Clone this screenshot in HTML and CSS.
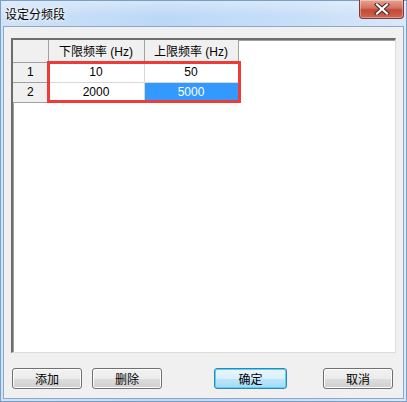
FILE: index.html
```html
<!DOCTYPE html>
<html>
<head>
<meta charset="utf-8">
<link rel="stylesheet" href="styles.css">
</head>
<body>
<div class="window">
  <div class="titlebar">
    <span class="title">设定分频段</span>
    <div class="close">
      <svg width="16" height="12" viewBox="0 0 16 12">
        <path d="M3 1.5 L13 10.5 M13 1.5 L3 10.5" stroke="#4a2a2a" stroke-width="4.2" stroke-linecap="square"/>
        <path d="M3 1.5 L13 10.5 M13 1.5 L3 10.5" stroke="#ffffff" stroke-width="2.2" stroke-linecap="square"/>
      </svg>
    </div>
  </div>
  <div class="client">
    <div class="gridbox">
      <div class="tablewrap">
        <table class="grid">
          <tr class="head">
            <th class="rh"></th>
            <th class="c1">下限频率 (Hz)</th>
            <th class="c2">上限频率 (Hz)</th>
          </tr>
          <tr>
            <td class="rh">1</td>
            <td>10</td>
            <td>50</td>
          </tr>
          <tr>
            <td class="rh">2</td>
            <td>2000</td>
            <td class="sel">5000</td>
          </tr>
        </table>
        <div class="highlight"></div>
      </div>
    </div>
    <div class="buttons">
      <div class="left">
        <button class="btn">添加</button>
        <button class="btn">删除</button>
      </div>
      <div class="right">
        <button class="btn default">确定</button>
        <button class="btn">取消</button>
      </div>
    </div>
  </div>
</div>
</body>
</html>
```
FILE: styles.css
```css
html, body {
  margin: 0;
  padding: 0;
  width: 407px;
  height: 402px;
  overflow: hidden;
  font-family: "Liberation Sans", "Noto Sans CJK SC", sans-serif;
  font-size: 12px;
}
.window {
  box-sizing: border-box;
  width: 407px;
  height: 402px;
  border: 1px solid #7b9ec4;
  background: linear-gradient(90deg, #cfe2f7 0%, #bcd8f6 40%, #c8dff8 75%, #d9e8fa 100%);
  display: flex;
  flex-direction: column;
  padding: 0 2px 2px 2px;
}
.titlebar {
  height: 25px;
  position: relative;
  display: flex;
  align-items: center;
  background: linear-gradient(180deg, rgba(255,255,255,0.35) 0%, rgba(255,255,255,0) 60%);
  margin: 0 -2px;
  padding: 0 2px;
}
.title {
  font-family: "Noto Sans CJK SC", sans-serif;
  font-size: 12px;
  color: #000;
  margin-left: 2px;
  text-shadow: 0 0 6px #ffffff, 0 0 3px #ffffff;
}
.close {
  position: absolute;
  right: 2px;
  top: -1px;
  width: 45px;
  height: 19px;
  border: 1px solid #7a3a38;
  border-top: none;
  border-radius: 0 0 4px 4px;
  background: linear-gradient(180deg, #e8a493 0%, #d5705e 45%, #c24a37 55%, #d2654f 100%);
  box-shadow: inset 0 0 0 1px rgba(255,255,255,0.35);
  display: flex;
  align-items: center;
  justify-content: center;
  box-sizing: border-box;
}
.client {
  flex: 1;
  background: #f0f0f0;
  border: 1px solid #8ea7c6;
  position: relative;
  display: flex;
  flex-direction: column;
}
.gridbox {
  margin: 11px 7px 0 7px;
  height: 315px;
  box-sizing: border-box;
  background: #ffffff;
  border-top: 2px solid #6d6d6d;
  border-left: 2px solid #6d6d6d;
  border-right: 1px solid #dcdcdc;
  border-bottom: 1px solid #dcdcdc;
  box-shadow: inset 1px 1px 0 #a0a0a0;
}
.tablewrap {
  position: relative;
  width: max-content;
}
.grid {
  border-collapse: collapse;
  table-layout: fixed;
}
.grid th, .grid td {
  padding: 0;
  text-align: center;
  font-weight: normal;
  color: #000;
  box-sizing: border-box;
}
.grid th {
  height: 22px;
  background: #f0f0f0;
  border-right: 1px solid #a0a0a0;
  border-bottom: 1px solid #a0a0a0;
  font-family: "Liberation Sans", "Noto Sans CJK SC", sans-serif;
  font-size: 12px;
}
.grid td {
  height: 20px;
  background: #ffffff;
  border-right: 1px solid #d8d8d8;
  border-bottom: 1px solid #d8d8d8;
}
.grid .rh {
  width: 35px;
  background: #f0f0f0;
  border-right: 1px solid #a0a0a0;
  border-bottom: 1px solid #a0a0a0;
}
.grid .c1 { width: 96px; }
.grid .c2 { width: 94px; }
.grid td.sel {
  background: #3399ff;
  color: #ffffff;
}
.highlight {
  position: absolute;
  left: 34px;
  top: 21px;
  width: 194px;
  height: 42px;
  box-sizing: border-box;
  border: 3px solid #ef3a3a;
}
.buttons {
  display: flex;
  justify-content: space-between;
  margin: 15px 10px 0 8px;
}
.left, .right {
  display: flex;
}
.left { gap: 10px; }
.right { gap: 36px; }
.btn {
  box-sizing: border-box;
  width: 70px;
  height: 21px;
  padding: 0;
  margin: 0;
  font-family: "Noto Sans CJK SC", sans-serif;
  font-size: 12px;
  color: #000;
  border: 1px solid #707070;
  border-radius: 3px;
  background: linear-gradient(180deg, #f2f2f2 0%, #ebebeb 50%, #dddddd 51%, #cfcfcf 100%);
  box-shadow: inset 0 0 0 1px #fcfcfc;
  line-height: 17px;
}
.btn.default {
  width: 73px;
  border-color: #3c7fb1;
  background: linear-gradient(180deg, #eaf6fd 0%, #d9f0fc 50%, #bee6fd 51%, #a7d9f5 100%);
  box-shadow: inset 0 0 0 1px #48d8fb;
}
```
